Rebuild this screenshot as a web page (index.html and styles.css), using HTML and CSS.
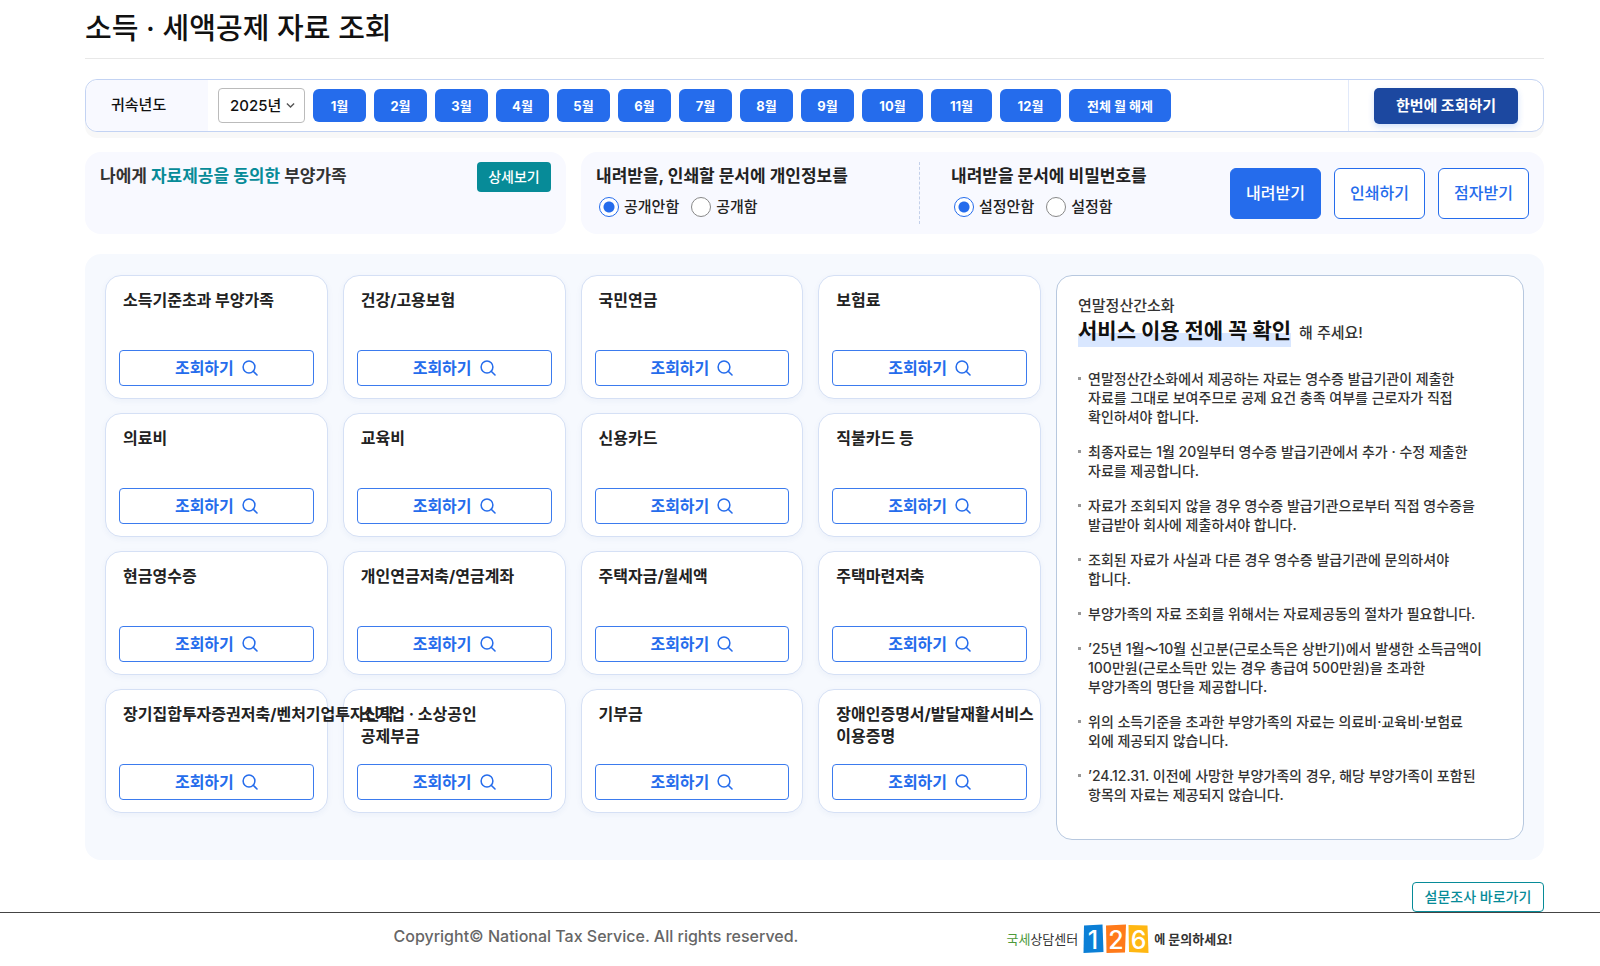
FILE: index.html
```html
<!DOCTYPE html>
<html lang="ko">
<head>
  <meta charset="UTF-8" />
  <meta name="viewport" content="width=device-width, initial-scale=1.0" />
  <title>소득 · 세액공제 자료 조회</title>
  <link rel="stylesheet" href="styles.css">
</head>
<body>

  <!-- 돋보기 아이콘 -->
  <svg class="sprite" aria-hidden="true">
    <symbol id="ico-search" viewBox="0 0 16 16">
      <circle cx="7" cy="7" r="5.9" fill="none" stroke="currentColor" stroke-width="1.5"/>
      <path d="M11.2 11.2 15 15" fill="none" stroke="currentColor" stroke-width="1.6" stroke-linecap="round"/>
    </symbol>
  </svg>

  <main class="wrap">
    <h1 class="page-title">소득 · 세액공제 자료 조회</h1>

    <!-- 귀속년도 -->
    <section class="search-bar">
      <label class="search-label" for="year">귀속년도</label>
      <div class="search-body">
        <div class="year">
          <select id="year"><option>2025년</option></select>
          <svg class="year-arrow" viewBox="0 0 8 8" aria-hidden="true"><path d="M.8 2.2 4 5.4 7.2 2.2" fill="none" stroke="#555" stroke-width="1.2"/></svg>
        </div>
        <button class="month">1월</button>
        <button class="month">2월</button>
        <button class="month">3월</button>
        <button class="month">4월</button>
        <button class="month">5월</button>
        <button class="month">6월</button>
        <button class="month">7월</button>
        <button class="month">8월</button>
        <button class="month">9월</button>
        <button class="month wide">10월</button>
        <button class="month wide">11월</button>
        <button class="month wide">12월</button>
        <button class="month clear">전체 월 해제</button>
      </div>
      <div class="search-action"><button class="btn-all">한번에 조회하기</button></div>
    </section>

    <!-- 부양가족 / 문서 옵션 -->
    <div class="options">
      <section class="family">
        <h2>나에게 <em>자료제공을 동의한</em> 부양가족</h2>
        <button class="btn-detail">상세보기</button>
      </section>
      <section class="document">
        <fieldset class="privacy">
          <legend>내려받을, 인쇄할 문서에 개인정보를</legend>
          <div class="radios">
            <label><input type="radio" name="privacy" checked>공개안함</label>
            <label><input type="radio" name="privacy">공개함</label>
          </div>
        </fieldset>
        <fieldset class="password">
          <legend>내려받을 문서에 비밀번호를</legend>
          <div class="radios">
            <label><input type="radio" name="password" checked>설정안함</label>
            <label><input type="radio" name="password">설정함</label>
          </div>
        </fieldset>
        <div class="doc-btns">
          <button class="btn-doc primary">내려받기</button>
          <button class="btn-doc">인쇄하기</button>
          <button class="btn-doc">점자받기</button>
        </div>
      </section>
    </div>

    <!-- 공제 항목 -->
    <div class="panel">
      <section class="cards">
        <article class="card"><h3>소득기준초과 부양가족</h3><button class="btn-view">조회하기<svg><use href="#ico-search"/></svg></button></article>
        <article class="card"><h3>건강/고용보험</h3><button class="btn-view">조회하기<svg><use href="#ico-search"/></svg></button></article>
        <article class="card"><h3>국민연금</h3><button class="btn-view">조회하기<svg><use href="#ico-search"/></svg></button></article>
        <article class="card"><h3>보험료</h3><button class="btn-view">조회하기<svg><use href="#ico-search"/></svg></button></article>
        <article class="card"><h3>의료비</h3><button class="btn-view">조회하기<svg><use href="#ico-search"/></svg></button></article>
        <article class="card"><h3>교육비</h3><button class="btn-view">조회하기<svg><use href="#ico-search"/></svg></button></article>
        <article class="card"><h3>신용카드</h3><button class="btn-view">조회하기<svg><use href="#ico-search"/></svg></button></article>
        <article class="card"><h3>직불카드 등</h3><button class="btn-view">조회하기<svg><use href="#ico-search"/></svg></button></article>
        <article class="card"><h3>현금영수증</h3><button class="btn-view">조회하기<svg><use href="#ico-search"/></svg></button></article>
        <article class="card"><h3>개인연금저축/연금계좌</h3><button class="btn-view">조회하기<svg><use href="#ico-search"/></svg></button></article>
        <article class="card"><h3>주택자금/월세액</h3><button class="btn-view">조회하기<svg><use href="#ico-search"/></svg></button></article>
        <article class="card"><h3>주택마련저축</h3><button class="btn-view">조회하기<svg><use href="#ico-search"/></svg></button></article>
        <article class="card"><h3 class="nowrap">장기집합투자증권저축/벤처기업투자신탁</h3><button class="btn-view">조회하기<svg><use href="#ico-search"/></svg></button></article>
        <article class="card"><h3>소기업 · 소상공인<br>공제부금</h3><button class="btn-view">조회하기<svg><use href="#ico-search"/></svg></button></article>
        <article class="card"><h3>기부금</h3><button class="btn-view">조회하기<svg><use href="#ico-search"/></svg></button></article>
        <article class="card"><h3 class="nowrap">장애인증명서/발달재활서비스<br>이용증명</h3><button class="btn-view">조회하기<svg><use href="#ico-search"/></svg></button></article>
      </section>

      <aside class="notice">
        <p class="notice-head">연말정산간소화<br><strong>서비스 이용 전에 꼭 확인</strong>해 주세요!</p>
        <ul>
          <li>연말정산간소화에서 제공하는 자료는 영수증 발급기관이 제출한 자료를 그대로 보여주므로 공제 요건 충족 여부를 근로자가 직접 확인하셔야 합니다.</li>
          <li>최종자료는 1월 20일부터 영수증 발급기관에서 추가 · 수정 제출한 자료를 제공합니다.</li>
          <li>자료가 조회되지 않을 경우 영수증 발급기관으로부터 직접 영수증을 발급받아 회사에 제출하셔야 합니다.</li>
          <li>조회된 자료가 사실과 다른 경우 영수증 발급기관에 문의하셔야 합니다.</li>
          <li>부양가족의 자료 조회를 위해서는 자료제공동의 절차가 필요합니다.</li>
          <li>’25년 1월～10월 신고분(근로소득은 상반기)에서 발생한 소득금액이 100만원(근로소득만 있는 경우 총급여 500만원)을 초과한 부양가족의 명단을 제공합니다.</li>
          <li>위의 소득기준을 초과한 부양가족의 자료는 의료비·교육비·보험료 외에 제공되지 않습니다.</li>
          <li>’24.12.31. 이전에 사망한 부양가족의 경우, 해당 부양가족이 포함된 항목의 자료는 제공되지 않습니다.</li>
        </ul>
      </aside>
    </div>

    <div class="survey"><a href="#">설문조사 바로가기</a></div>
  </main>

  <footer class="footer">
    <p class="copyright">Copyright© National Tax Service. All rights reserved.</p>
    <p class="call">
      <span class="call-name"><b>국세</b>상담센터</span>
      <svg class="call-num" viewBox="0 0 66 30" role="img" aria-label="126">
        <path d="M1 1.5 19.5.5 20.5 28 .5 29Z" fill="#0b7fd6"/>
        <path d="M23 1.5 43 .5 42 28.5 23.5 29Z" fill="#ff7a1a"/>
        <path d="M45.5 1 64.5 1.5 65.5 29 46 28Z" fill="#ffb712"/>
        <text x="10" y="25">1</text>
        <text x="33" y="25">2</text>
        <text x="55.5" y="25">6</text>
      </svg>
      <span class="call-ask"><small>에</small> 문의하세요!</span>
    </p>
  </footer>

</body>
</html>
```
FILE: styles.css
```css
/* ===== 기본 ===== */
*{box-sizing:border-box;}
body{
  margin:0;
  font-family:Inter,"Noto Sans CJK KR",sans-serif;
  font-size:16px;line-height:22px;font-weight:500;
  color:#111;background:#fff;word-break:keep-all;
}
h1,h2,h3,p,ul,fieldset,legend{margin:0;padding:0;border:0;}
button,select,input{font:inherit;color:inherit;margin:0;}
button{display:flex;align-items:center;justify-content:center;padding:0;cursor:pointer;white-space:nowrap;}
.sprite{display:none;}

.wrap{padding:0 56px 0 85px;}
.page-title{
  height:59px;line-height:58px;font-size:29px;font-weight:500;
  border-bottom:1px solid #e8e8e8;
}

/* ===== 귀속년도 ===== */
.search-bar{
  display:flex;margin-top:20px;height:53px;
  border:1px solid #c3d3f3;border-radius:12px;
  box-shadow:0 6px 0 #f8f8f8;background:#fff;
}
.search-label{
  width:122px;padding-left:25px;line-height:50px;font-size:15px;
  background:#f8f9ff;border-radius:12px 0 0 12px;
}
.search-body{flex:1;display:flex;align-items:center;gap:8px;padding-left:10px;}
.year{display:grid;align-items:center;width:87px;}
.year select{
  grid-area:1/1;width:100%;height:35px;padding:0 11px;appearance:none;
  border:1px solid #bbb;border-radius:4px;background:#fff;font-size:15px;
}
.year-arrow{grid-area:1/1;justify-self:end;width:9px;height:9px;margin-right:10px;pointer-events:none;}
.month{
  width:53px;height:33px;border:0;border-radius:6px;
  background:#256cec;color:#fff;font-size:13px;font-weight:700;
}
.month.wide{width:61px;}
.month.clear{width:102px;}
.search-action{display:flex;align-items:center;padding:0 25px;border-left:1px solid #e1e9fa;}
.btn-all{
  width:144px;height:36px;border:0;border-radius:5px;
  background:#1c48a0;color:#fff;font-size:15px;font-weight:700;
  box-shadow:0 3px 6px rgba(37,108,236,.2);
}

/* ===== 옵션 영역 ===== */
.options{display:grid;grid-template-columns:481fr 963fr;gap:15px;margin-top:20px;}
.options h2,.options legend{font-size:17px;line-height:24px;font-weight:700;}
.family,.document{height:82px;border-radius:16px;background:#f8f9ff;}
.family{display:flex;justify-content:space-between;align-items:flex-start;padding:10px 15px;}
.family h2{padding-top:2px;color:#333;}
.family em{font-style:normal;color:#078b98;}
.btn-detail{width:74px;height:30px;border:0;border-radius:4px;background:#078b98;color:#fff;font-size:14px;}
.document{display:flex;align-items:center;padding:0 15px;}
.privacy,.password{height:62px;padding-top:2px;color:#222;}
.privacy{flex:0 1 324px;border-right:1px dashed #c3d0ea;}
.password{flex:1;padding-left:31px;}
.options legend{float:left;width:100%;}
.radios{clear:both;display:flex;gap:12px;padding:9px 0 0 3px;}
.radios label{display:flex;align-items:center;gap:5px;font-size:15px;line-height:20px;}
.radios input{
  appearance:none;width:20px;height:20px;
  border:1px solid #888;border-radius:50%;background:#fff;
}
.radios input:checked{border-color:#256cec;background:radial-gradient(circle,#256cec 5px,#fff 6px);}
.doc-btns{display:flex;gap:13px;}
.btn-doc{width:91px;height:51px;border:1px solid #256cec;border-radius:6px;background:#fff;color:#256cec;}
.btn-doc.primary{background:#256cec;color:#fff;}

/* ===== 공제 항목 ===== */
.panel{
  display:grid;grid-template-columns:2fr 1fr;gap:15px;
  margin-top:20px;padding:21px 20px 20px;border-radius:16px;background:#f6f9fe;
}
.cards{
  display:grid;grid-template-columns:repeat(4,minmax(0,1fr));
  grid-auto-rows:124px;gap:14px 15px;align-content:start;
}
.card{
  display:flex;flex-direction:column;justify-content:space-between;
  padding:13px 13px 12px;border:1px solid #d5e0f5;border-radius:16px;
  background:#fff;box-shadow:0 2px 6px rgba(30,70,160,.05);
}
/* 긴 제목은 옆 카드 위로 넘친다 */
.card h3{position:relative;padding-left:4px;font-size:16px;line-height:22px;font-weight:700;color:#222;}
.card .nowrap{white-space:nowrap;}
.btn-view{
  gap:8px;height:36px;border:1px solid #3b7bee;border-radius:4px;
  background:#fff;color:#256cec;font-weight:700;
}
.btn-view svg{width:16px;height:16px;}

/* ===== 안내 ===== */
.notice{padding:19px 36px 35px 21px;border:1px solid #b7c8df;border-radius:16px;background:#fff;color:#333;}
.notice-head{font-size:15px;line-height:22px;}
.notice-head strong{
  display:inline-block;margin-right:8px;padding-bottom:2px;
  font-size:21px;line-height:28px;font-weight:700;color:#111;
  background:linear-gradient(transparent 54%,#d9e7ff 54%);
}
.notice ul{margin-top:22px;list-style:none;display:grid;gap:16px;}
.notice li{display:flex;gap:7px;font-size:14px;line-height:19px;}
.notice li::before{content:"";flex:none;width:3px;height:3px;margin-top:8px;background:#999;}

/* ===== 하단 ===== */
.survey{display:flex;justify-content:flex-end;margin-top:22px;}
.survey a{
  width:132px;height:30px;line-height:28px;text-align:center;font-size:14px;
  border:1px solid #078b98;border-radius:4px;color:#078b98;text-decoration:none;
}
.footer{
  display:flex;justify-content:center;align-items:center;gap:208px;
  height:53px;padding-left:26px;border-top:1px solid #444;
}
.copyright{padding-bottom:6px;font-size:16px;color:#666;}
.call{display:flex;align-items:center;gap:5px;}
.call-name{font-size:13px;font-weight:400;color:#333;}
.call-name b{font-weight:400;color:#4e9a3b;}
.call-num{width:66px;height:30px;}
.call-num text{font-size:25px;font-weight:500;fill:#fff;text-anchor:middle;}
.call-ask{font-size:13px;font-weight:700;color:#333;}
.call-ask small{font-size:12px;}
```
